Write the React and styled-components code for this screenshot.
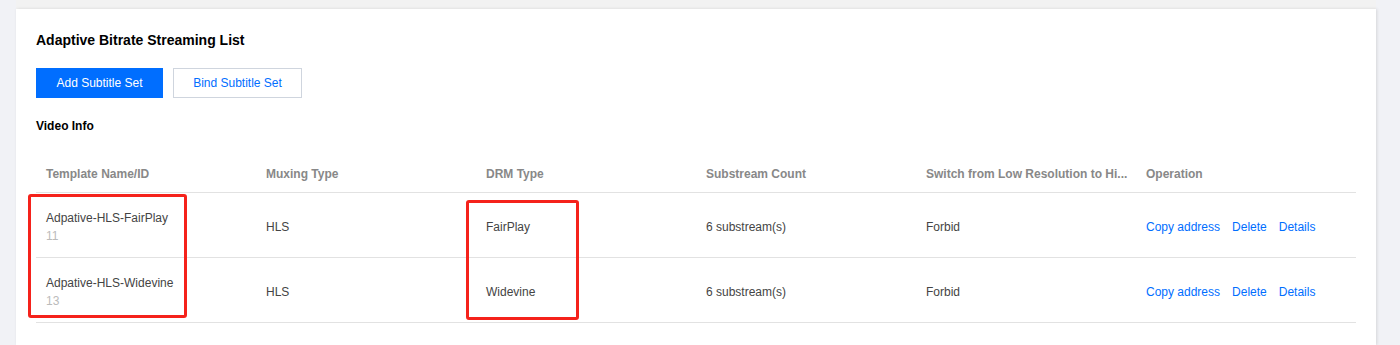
import React from 'react';
import styled, { createGlobalStyle } from 'styled-components';

const GlobalStyle = createGlobalStyle`
  html, body {
    margin: 0;
    padding: 0;
    background: #f1f2f6;
    font-family: "Liberation Sans", Arial, sans-serif;
  }
`;

const columns = [
  'Template Name/ID',
  'Muxing Type',
  'DRM Type',
  'Substream Count',
  'Switch from Low Resolution to Hi...',
  'Operation',
];

const rows = [
  { name: 'Adpative-HLS-FairPlay', id: '11', mux: 'HLS', drm: 'FairPlay', count: '6 substream(s)', sw: 'Forbid' },
  { name: 'Adpative-HLS-Widevine', id: '13', mux: 'HLS', drm: 'Widevine', count: '6 substream(s)', sw: 'Forbid' },
];

function App() {
  return (
    <>
      <GlobalStyle />
      <Page>
        <TopStrip />
        <Card>
          <Title>Adaptive Bitrate Streaming List</Title>
          <Toolbar>
            <Button primary width={127}>Add Subtitle Set</Button>
            <Button width={129}>Bind Subtitle Set</Button>
          </Toolbar>
          <SubTitle>Video Info</SubTitle>
          <TableWrap>
            <Table>
              <thead>
                <tr>
                  {columns.map((c) => (
                    <Th key={c}>{c}</Th>
                  ))}
                </tr>
              </thead>
              <tbody>
                {rows.map((r) => (
                  <tr key={r.id}>
                    <Td>
                      <Name>{r.name}</Name>
                      <Id>{r.id}</Id>
                    </Td>
                    <Td>{r.mux}</Td>
                    <Td>{r.drm}</Td>
                    <Td>{r.count}</Td>
                    <Td>{r.sw}</Td>
                    <Td>
                      <Links>
                        <Link>Copy address</Link>
                        <Link>Delete</Link>
                        <Link>Details</Link>
                      </Links>
                    </Td>
                  </tr>
                ))}
              </tbody>
            </Table>
            <Mark style={{ left: -8, top: 38, width: 159, height: 124 }} />
            <Mark style={{ left: 430, top: 44, width: 113, height: 120 }} />
          </TableWrap>
        </Card>
      </Page>
    </>
  );
}

const Page = styled.div`
  padding: 0 24px 0 16px;
  height: 345px;
  overflow: hidden;
`;

const TopStrip = styled.div`
  height: 9px;
  background: #f2f2f2;
`;

const Card = styled.div`
  background: #fff;
  height: 336px;
  padding: 21px 20px 0 20px;
  box-sizing: border-box;
  box-shadow: 1px 0 3px rgba(0, 0, 0, 0.12);
`;

const Title = styled.h2`
  margin: 0;
  font-size: 14px;
  font-weight: bold;
  color: #000;
  line-height: 20px;
`;

const Toolbar = styled.div`
  display: flex;
  gap: 10px;
  margin-top: 18px;
`;

const Button = styled.button`
  width: ${(p) => p.width}px;
  height: 30px;
  padding: 0;
  font-family: inherit;
  font-size: 12px;
  box-sizing: border-box;
  cursor: pointer;
  border: 1px solid ${(p) => (p.primary ? '#006eff' : '#cfd5de')};
  background: ${(p) => (p.primary ? '#006eff' : '#fff')};
  color: ${(p) => (p.primary ? '#fff' : '#006eff')};
`;

const SubTitle = styled.h3`
  margin: 20px 0 0;
  font-size: 12px;
  font-weight: bold;
  color: #000;
  line-height: 16px;
`;

const TableWrap = styled.div`
  position: relative;
  margin-top: 22px;
  width: 1320px;
`;

const Table = styled.table`
  width: 100%;
  border-collapse: collapse;
  table-layout: fixed;
`;

const Th = styled.th`
  text-align: left;
  font-size: 12px;
  font-weight: bold;
  color: #888;
  padding: 0 10px;
  height: 36px;
  border-bottom: 1px solid #e2e2e2;
  white-space: nowrap;
  overflow: hidden;
`;

const Td = styled.td`
  font-size: 12px;
  color: #444;
  padding: 4px 10px 0;
  height: 60px;
  border-bottom: 1px solid #e2e2e2;
  vertical-align: middle;
`;

const Name = styled.div`
  line-height: 18px;
`;

const Id = styled.div`
  color: #bbb;
  line-height: 18px;
`;

const Links = styled.div`
  display: flex;
  gap: 12px;
`;

const Link = styled.a`
  color: #006eff;
  cursor: pointer;
`;

const Mark = styled.div`
  position: absolute;
  border: 3px solid #f5221b;
  border-radius: 3px;
  box-sizing: border-box;
  pointer-events: none;
`;

export default App;
